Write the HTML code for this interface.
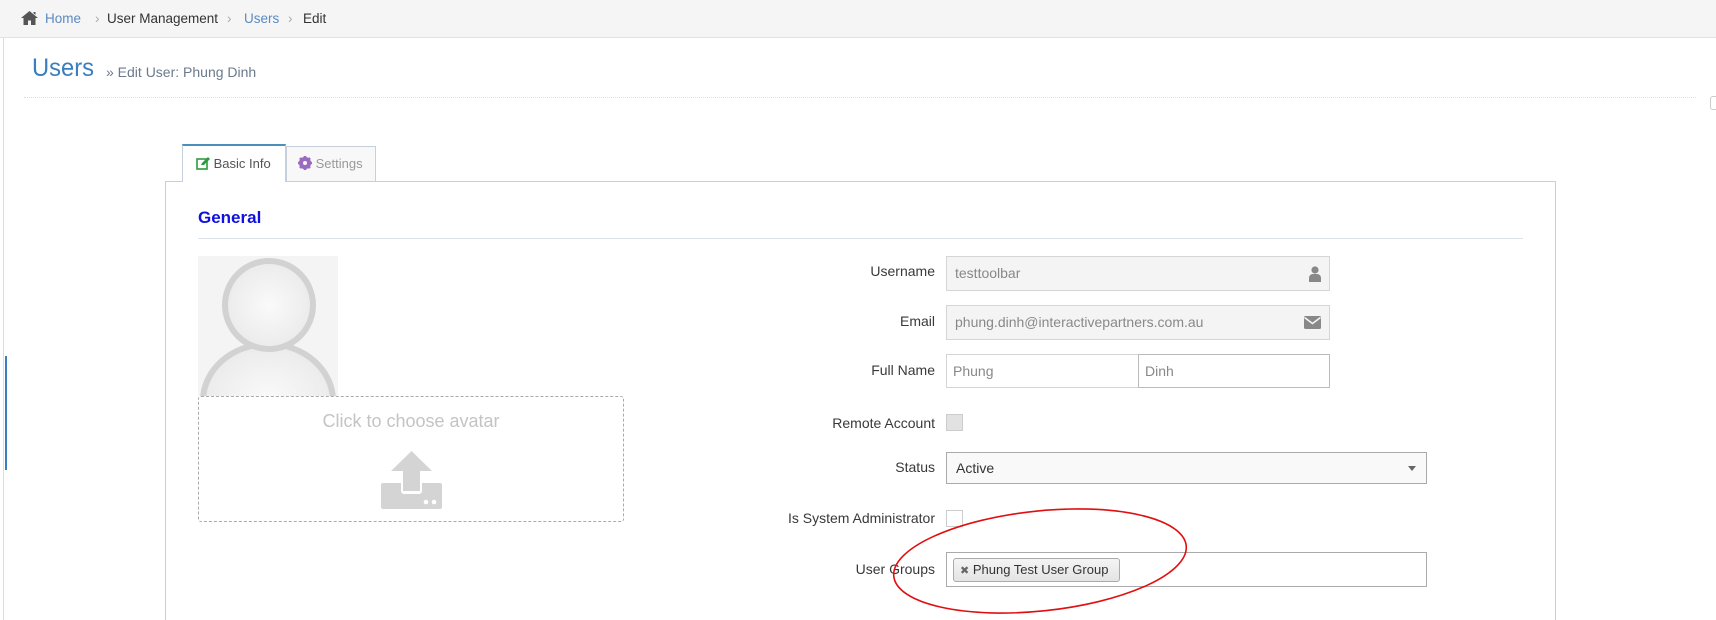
<!DOCTYPE html>
<html style="height:620px;overflow:hidden"><head><meta charset="utf-8"><style>
*{box-sizing:border-box;margin:0;padding:0}
body{width:1716px;height:620px;overflow:hidden;background:#fff;font-family:"Liberation Sans",sans-serif;position:relative;color:#333}
.a{position:absolute}
.bc{left:0;top:0;width:1716px;height:38px;background:#f5f5f5;border-bottom:1px solid #e2e2e2;font-size:13.5px;line-height:38px}
.lbl{position:absolute;right:781px;font-size:14px;color:#393939;text-align:right;white-space:nowrap}
.inp{position:absolute;border:1px solid #d5d5d5;font-size:14px;color:#888;padding-left:8px}
</style></head><body>
<div class="a" style="left:3px;top:38px;width:1px;height:582px;background:#ddd"></div>
<div class="a" style="left:5px;top:356px;width:2px;height:114px;background:#3a7ec0"></div>
<div class="a bc">
 <svg class="a" style="left:21px;top:11px" width="17" height="14" viewBox="0 0 17 14"><path d="M8.5 0L0 7h2.5v7h4.5v-4.5h3V14h4.5V7H17z M12.5 1h2v3l-2-1.7z" fill="#555"/></svg>
 <span class="a" style="left:45px;color:#5a8ac2">Home</span>
 <span class="a" style="left:95px;color:#aaa">›</span>
 <span class="a" style="left:107px;color:#333">User Management</span>
 <span class="a" style="left:227px;color:#aaa">›</span>
 <span class="a" style="left:244px;color:#5a8ac2">Users</span>
 <span class="a" style="left:288px;color:#aaa">›</span>
 <span class="a" style="left:303px;color:#333">Edit</span>
</div>
<div class="a" style="left:32px;top:54px;font-size:25px;font-weight:300;color:#3a7ec0;transform:scaleX(0.95);transform-origin:left">Users</div>
<div class="a" style="left:106px;top:64px;font-size:14px;color:#6a7a8c">» Edit User: Phung Dinh</div>
<div class="a" style="left:24px;top:97px;width:1672px;border-top:1px dotted #ddd"></div>
<div class="a" style="left:1710px;top:96px;width:6px;height:14px;border:1px solid #ccc;border-right:none;border-radius:3px 0 0 3px"></div>

<div class="a" style="left:165px;top:181px;width:1391px;height:450px;border:1px solid #c5d0dc"></div>
<div class="a" style="left:182px;top:144px;width:104px;height:38px;background:#fff;border:1px solid #c5d0dc;border-top:2px solid #4c8fbd;border-bottom:none;font-size:13px;line-height:35px;padding-left:13px;color:#555">
 <svg style="vertical-align:-2px" width="14" height="13" viewBox="0 0 14 13"><rect x="1" y="2" width="10" height="10" fill="none" stroke="#2e9a3e" stroke-width="1.6"/><path d="M5 8l1-2 6-6 2 2-6 6z" fill="#2e9a3e"/></svg> Basic Info</div>
<div class="a" style="left:286px;top:146px;width:90px;height:35px;background:#f8f8f8;border:1px solid #c5d0dc;border-bottom:none;font-size:13px;line-height:34px;padding-left:11px;color:#999">
 <svg style="vertical-align:-2px" width="14" height="14" viewBox="0 0 14 14"><circle cx="7" cy="7" r="4.6" fill="none" stroke="#9b6bc0" stroke-width="3"/><g stroke="#9b6bc0" stroke-width="2.6"><path d="M7 0v14M0 7h14M2 2l10 10M12 2L2 12"/></g><circle cx="7" cy="7" r="2" fill="#f8f8f8"/></svg> Settings</div>
<div class="a" style="left:198px;top:208px;font-size:17px;font-weight:bold;color:#1010e0">General</div>
<div class="a" style="left:198px;top:238px;width:1325px;border-top:1px solid #dce3ea"></div>

<div class="a" style="left:198px;top:256px;width:140px;height:140px;background:#f4f4f4;overflow:hidden">
 <div class="a" style="left:2px;top:85px;width:136px;height:120px;border-radius:50%;border:6px solid #d2d2d2;background:radial-gradient(#fafafa,#e6e6e6)"></div>
 <div class="a" style="left:24px;top:2px;width:94px;height:94px;border-radius:50%;border:6px solid #d2d2d2;background:radial-gradient(#fafafa,#e6e6e6)"></div>
</div>
<div class="a" style="left:198px;top:396px;width:426px;height:126px;border:1px dashed #aaa;border-radius:3px;background:#fff">
 <div style="text-align:center;margin-top:14px;font-size:18px;color:#c4c4c4">Click to choose avatar</div>
 <svg class="a" style="left:182px;top:54px" width="61" height="59" viewBox="0 0 61 59"><path d="M30.5 0L51 20H39v20H22V20H10z" fill="#d4d4d4"/><path d="M2 32h18v8a3 3 0 0 0 3 3h15a3 3 0 0 0 3-3v-8h18a2 2 0 0 1 2 2v22a2 2 0 0 1-2 2H2a2 2 0 0 1-2-2V34a2 2 0 0 1 2-2z" fill="#d4d4d4"/><circle cx="45" cy="51" r="2.3" fill="#fff"/><circle cx="53" cy="51" r="2.3" fill="#fff"/></svg>
</div>

<div class="lbl" style="top:263px">Username</div>
<div class="inp" style="left:946px;top:256px;width:384px;height:35px;background:#f4f4f4;line-height:33px">testtoolbar
 <svg class="a" style="right:8px;top:9px" width="12" height="16" viewBox="0 0 12 16"><circle cx="6" cy="4" r="3.6" fill="#888"/><path d="M0 16v-4a4 4 0 0 1 4-4h4a4 4 0 0 1 4 4v4z" fill="#888"/></svg></div>
<div class="lbl" style="top:313px">Email</div>
<div class="inp" style="left:946px;top:305px;width:384px;height:35px;background:#f4f4f4;line-height:33px">phung.dinh@interactivepartners.com.au
 <svg class="a" style="right:8px;top:10px" width="17" height="13" viewBox="0 0 17 13"><rect width="17" height="13" rx="1.5" fill="#888"/><path d="M0.5 1.5L8.5 7.5L16.5 1.5" fill="none" stroke="#f4f4f4" stroke-width="1.5"/></svg></div>
<div class="lbl" style="top:362px">Full Name</div>
<div class="inp" style="left:946px;top:354px;width:193px;height:34px;line-height:32px;padding-left:6px">Phung</div>
<div class="inp" style="left:1138px;top:354px;width:192px;height:34px;line-height:32px;padding-left:6px;border-color:#bbb">Dinh</div>
<div class="lbl" style="top:415px">Remote Account</div>
<div class="a" style="left:946px;top:414px;width:17px;height:17px;background:#e2e2e2;border:1px solid #ccc"></div>
<div class="lbl" style="top:459px">Status</div>
<div class="inp" style="left:946px;top:452px;width:481px;height:32px;background:#f9f9f9;border-color:#aaa;color:#333;line-height:30px;padding-left:9px">Active
 <div class="a" style="right:10px;top:13px;border:4px solid transparent;border-top:5px solid #666;border-bottom:none"></div></div>
<div class="lbl" style="top:510px">Is System Administrator</div>
<div class="a" style="left:946px;top:510px;width:17px;height:17px;background:#fff;border:1px solid #ccc"></div>
<div class="lbl" style="top:561px">User Groups</div>
<div class="inp" style="left:946px;top:552px;width:481px;height:35px;border-color:#aaa"></div>
<div class="a" style="left:953px;top:558px;width:167px;height:24px;background:linear-gradient(#f4f4f4,#e4e4e4);border:1px solid #aaa;border-radius:3px;font-size:13px;line-height:22px;color:#333;padding-left:6px"><span style="color:#666;font-size:11px">✖</span> Phung Test User Group</div>

<svg class="a" style="left:880px;top:500px" width="320" height="120" viewBox="0 0 320 120"><ellipse cx="160" cy="61" rx="147" ry="50" transform="rotate(-6 160 61)" fill="none" stroke="#e01010" stroke-width="1.6"/></svg>
</body></html>
